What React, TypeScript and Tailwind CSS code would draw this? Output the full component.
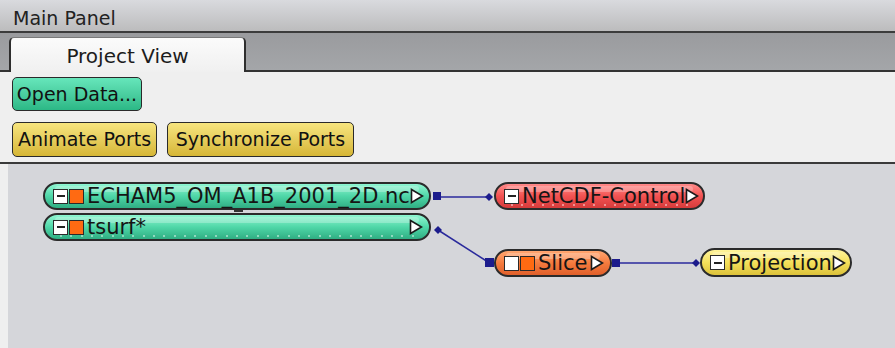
import React from 'react';

type NodeProps = {
  label: string;
  left: number;
  top: number;
  width: number;
  height: number;
  bg: string;
  boxes: ('minus' | 'white' | 'orange')[];
  dots?: boolean;
};

function Triangle() {
  return (
    <svg width="14" height="16" viewBox="0 0 14 16" className="shrink-0">
      <polygon points="1.5,1.5 12.5,8 1.5,14.5" fill="#ffffff" stroke="#1a1a1a" strokeWidth="1.6" />
    </svg>
  );
}

function Box({ kind }: { kind: 'minus' | 'white' | 'orange' }) {
  if (kind === 'orange') {
    return <div className="w-[15px] h-[15px] shrink-0 bg-[#ff6a12] border-[1.5px] border-[#2a2a2a]" />;
  }
  return (
    <div className="w-[15px] h-[15px] shrink-0 bg-white border-[1.5px] border-[#2a2a2a] flex items-center justify-center">
      {kind === 'minus' && <div className="w-[8px] h-[2px] bg-[#222]" />}
    </div>
  );
}

function Node({ label, left, top, width, height, bg, boxes, dots }: NodeProps) {
  const dotCount = Math.floor((width - 30) / 10);
  return (
    <div
      className={`absolute rounded-full border-2 border-[#2b2b2b] flex items-center pl-[8px] pr-[6px] ${bg}`}
      style={{ left, top, width, height }}
    >
      {/* glossy highlight */}
      <div className="absolute left-[10px] right-[10px] top-[2px] h-[6px] rounded-full bg-white/25" />
      {dots && (
        <div className="absolute left-[15px] right-[15px] bottom-[2px] flex justify-between">
          {Array.from({ length: dotCount }).map((_, i) => (
            <div key={i} className="w-[2px] h-[2px] rounded-full bg-white/60" />
          ))}
        </div>
      )}
      <div className="relative flex items-center gap-[1px]">
        {boxes.map((b, i) => (
          <Box key={i} kind={b} />
        ))}
      </div>
      <span className="relative flex-1 pl-[3px] text-[21px] leading-[24px] text-[#151515] whitespace-nowrap">
        {label}
      </span>
      <div className="relative">
        <Triangle />
      </div>
    </div>
  );
}

export default function App() {
  return (
    <div
      className="w-[895px] h-[348px] flex flex-col bg-[#efefef] overflow-hidden"
      style={{ fontFamily: '"DejaVu Sans", Verdana, sans-serif' }}
    >
      {/* Title bar */}
      <div className="h-[33px] shrink-0 bg-gradient-to-b from-[#d9dade] to-[#bcbcbd] border-b-2 border-[#3c3c3c] flex items-center pl-[13px] pt-[5px]">
        <span className="text-[19px] text-[#222] leading-none">Main Panel</span>
      </div>

      {/* Tab bar */}
      <div className="h-[39px] shrink-0 bg-gradient-to-b from-[#9a9b9e] to-[#a4a6a9] border-b-2 border-[#333] flex items-end pl-[9px]">
        <div className="relative z-10 -mb-[2px] w-[237px] h-[35px] rounded-t-[5px] border-x-2 border-[#2e2e2e] border-t border-t-[#7a7a7a] bg-gradient-to-b from-[#fbfbfb] to-[#f0f0f0] flex items-center justify-center pt-[2px]">
          <span className="text-[20px] text-[#1c1c1c] leading-none">Project View</span>
        </div>
      </div>

      {/* Buttons */}
      <div className="shrink-0 pt-[5px] pb-[5px] pl-[12px] flex flex-col gap-[11px] border-b-2 border-[#3a3a3a]">
        <div className="flex">
          <button className="w-[130px] h-[34px] rounded-[5px] border-[1.5px] border-[#2a2a2a] bg-gradient-to-b from-[#66e6bb] to-[#2bb886] text-[19px] text-[#111] leading-none flex items-center justify-center">
            Open Data...
          </button>
        </div>
        <div className="flex gap-[10px]">
          <button className="w-[145px] h-[35px] rounded-[5px] border-[1.5px] border-[#2a2a2a] bg-gradient-to-b from-[#f7e57e] to-[#d6b634] text-[19px] text-[#111] leading-none flex items-center justify-center">
            Animate Ports
          </button>
          <button className="w-[187px] h-[35px] rounded-[5px] border-[1.5px] border-[#2a2a2a] bg-gradient-to-b from-[#f7e57e] to-[#d6b634] text-[19px] text-[#111] leading-none flex items-center justify-center">
            Synchronize Ports
          </button>
        </div>
      </div>

      {/* Canvas */}
      <div className="relative flex-1 ml-[8px] bg-[#d5d6da]">
        <svg className="absolute inset-0" width="887" height="184">
          {/* ECHAM -> NetCDF */}
          <line x1="430" y1="33" x2="481" y2="33" stroke="#2a2a9c" strokeWidth="1.5" />
          <rect x="425" y="28" width="8" height="8" fill="#1c1c8c" />
          <polygon points="477,33 481,29 485,33 481,37" fill="#1c1c8c" />
          {/* tsurf -> Slice */}
          <line x1="430" y1="66" x2="480" y2="98" stroke="#2a2a9c" strokeWidth="1.5" />
          <polygon points="426,66 430,62 434,66 430,70" fill="#1c1c8c" />
          <rect x="477" y="94" width="9" height="9" fill="#1c1c8c" />
          {/* Slice -> Projection */}
          <line x1="608" y1="99" x2="688" y2="99" stroke="#2a2a9c" strokeWidth="1.5" />
          <rect x="604" y="95" width="8" height="8" fill="#1c1c8c" />
          <polygon points="684,99 688,95 692,99 688,103" fill="#1c1c8c" />
          {/* small joint between nodes */}
          <rect x="226" y="45" width="9" height="3" fill="#333" />
        </svg>

        <Node
          label="ECHAM5_OM_A1B_2001_2D.nc"
          left={35}
          top={18}
          width={388}
          height={28}
          bg="bg-gradient-to-b from-[#8ef6d2] via-[#4fd7a8] to-[#2fae83]"
          boxes={['minus', 'orange']}
        />
        <Node
          label="tsurf*"
          left={35}
          top={49}
          width={388}
          height={28}
          bg="bg-gradient-to-b from-[#8ef6d2] via-[#4fd7a8] to-[#2fae83]"
          boxes={['minus', 'orange']}
          dots
        />
        <Node
          label="NetCDF-Control"
          left={486}
          top={18}
          width={211}
          height={28}
          bg="bg-gradient-to-b from-[#ff8a8a] via-[#f25252] to-[#d63b3b]"
          boxes={['minus']}
          dots
        />
        <Node
          label="Slice"
          left={486}
          top={85}
          width={118}
          height={28}
          bg="bg-gradient-to-b from-[#ffa670] via-[#f57b3e] to-[#e0602b]"
          boxes={['white', 'orange']}
        />
        <Node
          label="Projection"
          left={692}
          top={84}
          width={152}
          height={29}
          bg="bg-gradient-to-b from-[#fff39a] via-[#f4e05a] to-[#dcc23a]"
          boxes={['minus']}
        />
      </div>
    </div>
  );
}
